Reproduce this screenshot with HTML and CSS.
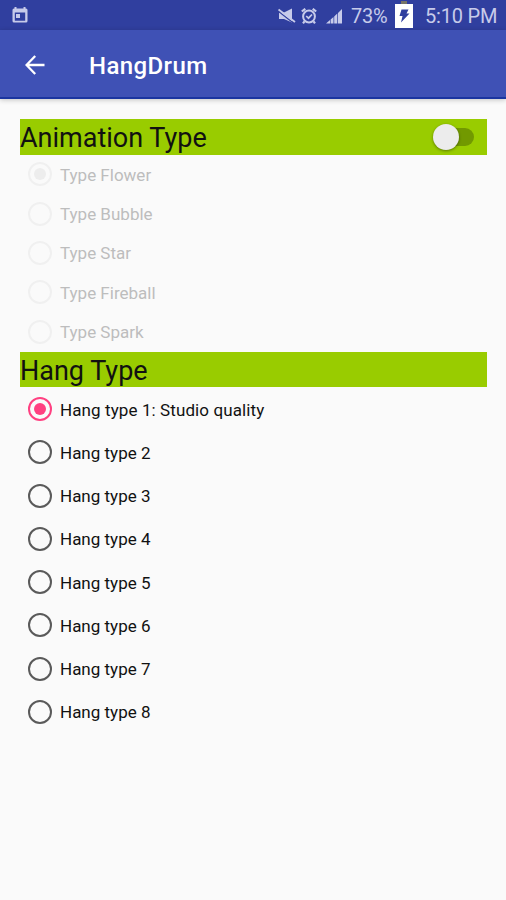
FILE: index.html
```html
<!DOCTYPE html>
<html lang="en">
<head>
<meta charset="utf-8">
<title>HangDrum</title>
<link rel="stylesheet" href="styles.css">
</head>
<body>
<div class="status">
  <svg class="calendar" width="16" height="17" viewBox="0 0 16 17"><path fill="currentColor" fill-rule="evenodd" d="M2.500 0h2v1.500h7V0h2v1.500h.5q1.500 0 1.500 1.500v11q0 1.500-1.500 1.500h-12Q.5 15.500.5 14V3q0-1.500 1.500-1.500h.5zM2.800 5.500v8.200h10.400V5.500zM4 7h4v4H4z"/></svg>
  <svg class="mute" width="18" height="16" viewBox="0 0 18 16"><path fill="currentColor" d="M1 4.500h5L14 .5v14L6 11H1z"/><path d="M0 3L16 15.500" stroke="#303f9f" stroke-width="1.300"/><path d="M.5 1.500L17 14" stroke="currentColor" stroke-width="1.800"/></svg>
  <svg class="alarm" width="16" height="16" viewBox="0 0 16 16" fill="none" stroke="currentColor"><circle cx="8" cy="8.500" r="5.900" stroke-width="2"/><path stroke-width="2.200" d="M.8 3.500L4.300.8M11.700.8l3.500 2.700M3.500 13.300L2 15.300M12.500 13.300l1.500 2"/><path stroke-width="1.700" d="M5.200 8l2.300 2.200 3.500-3.700"/></svg>
  <svg class="signal" width="17" height="16" viewBox="0 0 17 16" fill="currentColor"><path d="M0 15.500l4-3.500v3.500zM4.600 11.500L7.500 9v6.500H4.600zM8.200 8.400L11.300 5.500v10H8.200zM12 4.900L16 1v14.500h-4z"/></svg>
  <span class="percent">73%</span>
  <svg class="battery" width="18" height="28" viewBox="0 0 18 28"><path fill="#777568" d="M6 1h6v3H6z"/><path fill="#fff" d="M0 4h18v24H0z"/><path fill="#303f9f" d="M6.500 9.500h7l-2 4h3L6 22.500l1.500-6.500H4.500z"/></svg>
  <span class="clock">5:10 PM</span>
</div>
<header class="bar">
  <svg width="20" height="20" viewBox="0 0 20 20" fill="none" stroke="#fff" stroke-width="2.300"><path d="M19.500 10H2M10.200 1L1.500 10l8.700 9"/></svg>
  <h1>HangDrum</h1>
</header>
<main>
  <div class="section"><h2>Animation Type</h2><span class="switch"><span class="thumb"></span></span></div>
  <ul class="off">
    <li><i class="radio on"></i><span>Type Flower</span></li>
    <li><i class="radio"></i><span>Type Bubble</span></li>
    <li><i class="radio"></i><span>Type Star</span></li>
    <li><i class="radio"></i><span>Type Fireball</span></li>
    <li><i class="radio"></i><span>Type Spark</span></li>
  </ul>
  <div class="section"><h2>Hang Type</h2></div>
  <ul class="hang">
    <li><i class="radio on"></i><span class="long">Hang type 1: Studio quality</span></li>
    <li><i class="radio"></i><span>Hang type 2</span></li>
    <li><i class="radio"></i><span>Hang type 3</span></li>
    <li><i class="radio"></i><span>Hang type 4</span></li>
    <li><i class="radio"></i><span>Hang type 5</span></li>
    <li><i class="radio"></i><span>Hang type 6</span></li>
    <li><i class="radio"></i><span>Hang type 7</span></li>
    <li><i class="radio"></i><span>Hang type 8</span></li>
  </ul>
</main>
</body>
</html>
```
FILE: styles.css
```css
* { box-sizing: border-box; }
body { margin: 0; height: 900px; overflow: hidden; background: #fafafa; color: #111; font-family: Roboto, sans-serif; }
h1, h2, ul { margin: 0; padding: 0; font-weight: 400; }
ul { list-style: none; }
svg { display: block; flex: none; }
.status { height: 30px; background: #303f9f; color: #c7cbea; display: flex; align-items: flex-start; font-size: 20px; line-height: 33px; white-space: nowrap; }
.calendar { margin: 7px 0 0 12px; }
.mute { margin: 8px 0 0 250px; }
.alarm { margin: 8px 0 0 5px; }
.signal { margin: 8px 0 0 9px; }
.percent { width: 44px; margin-left: 8px; letter-spacing: -0.3px; }
.battery { width: 18px; }
.clock { margin-left: 12px; letter-spacing: -0.2px; }
.bar { height: 69px; background: #3f51b5; border-bottom: 2px solid #1b35a0; box-shadow: 0 1px 5px rgba(0,0,0,.22); display: flex; align-items: center; padding: 2px 0 0 25px; color: #fff; }
.bar h1 { margin: 2px 0 0 44px; font-size: 24px; font-weight: 500; line-height: 30px; letter-spacing: .4px; }
main { padding: 20px 19px 0 20px; }
.section { height: 35.5px; background: #9c0; display: flex; align-items: center; justify-content: space-between; padding: 0 13px 0 0; }
h2 { font-size: 27px; line-height: 34px; padding-top: 3px; }
.switch { width: 36px; height: 18px; border-radius: 9px; background: #729900; position: relative; }
.thumb { position: absolute; left: -5px; top: -4px; width: 26px; height: 26px; border-radius: 50%; background: #ececec; box-shadow: 0 1px 3px rgba(0,0,0,.4); }
li { display: flex; align-items: center; padding-left: 8px; font-size: 17px; white-space: nowrap; }
li span { padding-top: 1px; }
.off { padding-bottom: .5px; }
.off li { height: 39.4px; color: #bdbdbd; }
.hang li { height: 43.25px; }
.long { letter-spacing: .1px; }
.radio { width: 24px; height: 24px; border: 2px solid #5a5a5a; border-radius: 50%; margin-right: 8px; display: grid; place-items: center; }
.off .radio { border-color: #f0f0f0; }
.on::after { content: ""; width: 12px; height: 12px; border-radius: 50%; background: #ff4081; }
.hang .on { border-color: #ff4081; }
.off .on::after { background: #ededed; }
```
